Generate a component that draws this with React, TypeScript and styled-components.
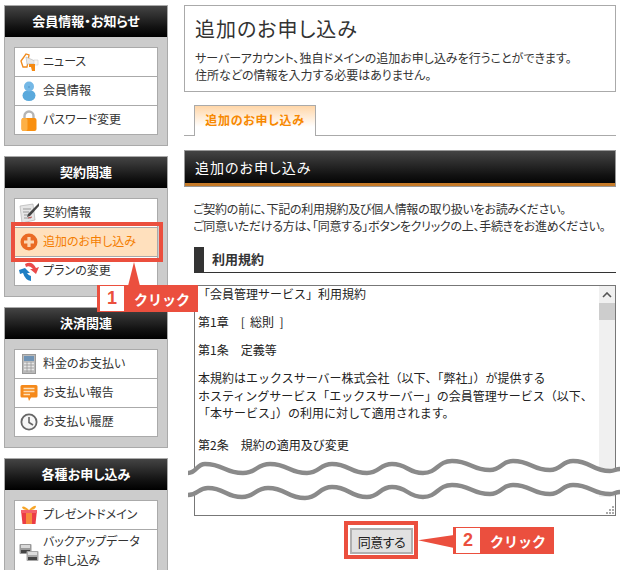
import React from 'react';
import styled, { createGlobalStyle } from 'styled-components';

const GlobalStyle = createGlobalStyle`
  html, body {
    margin: 0;
    padding: 0;
    background: #fff;
  }
  body {
    font-family: "Noto Sans CJK JP", "Liberation Sans", sans-serif;
    font-size: 12px;
    color: #333;
    font-feature-settings: "palt";
  }
`;

const Red = '#eb4f3e';

const IconMegaphone = () => (
  <svg width="20" height="20" viewBox="0 0 20 20">
    <path d="M2 9 L7 2 L10 3 L8 15 L4 15 Z" fill="#fff" stroke="#f08a1c" strokeWidth="1.3" />
    <path d="M7 5 L16 9 L16 12 L8 12 Z" fill="#e8e8e8" stroke="#bbb" strokeWidth="0.7" />
    <path d="M15 8 L19 8 L19 13 L15 13 Z" fill="#f8f8f8" stroke="#ccc" strokeWidth="0.6" />
    <path d="M10 12 L16 12 L16 19 L13 19 L12 15 L10 15 Z" fill="#f58a12" />
  </svg>
);

const IconPerson = () => (
  <svg width="20" height="20" viewBox="0 0 20 20">
    <ellipse cx="10" cy="14.5" rx="6.5" ry="5.5" fill="#5aa9dc" />
    <circle cx="10" cy="5.5" r="5" fill="#74b8e6" />
    <circle cx="10" cy="6" r="0.8" fill="#4a90c4" />
  </svg>
);

const IconLock = () => (
  <svg width="18" height="21" viewBox="0 0 18 21">
    <path d="M4.5 9 V6 a4.5 4.5 0 0 1 9 0 V9" fill="none" stroke="#b5b5b5" strokeWidth="2.4" />
    <rect x="1.5" y="8" width="15" height="13" rx="2" fill="#f98f0e" />
    <rect x="1.5" y="8" width="6" height="13" rx="2" fill="#fdb045" />
  </svg>
);

const IconContract = () => (
  <svg width="22" height="22" viewBox="0 0 22 22">
    <path d="M2 4 L15 2 L17 18 L4 21 Z" fill="#e6e6e6" stroke="#aaa" strokeWidth="0.6" />
    <path d="M5 7 H13 M5 10 H11 M6 13 H10 M6 16 H13" stroke="#999" strokeWidth="1" />
    <path d="M21 1 L10 12 L9 15 L12 14 L21 4 Z" fill="#444" />
    <path d="M10 16 L14 15" stroke="#c0504d" strokeWidth="1" />
  </svg>
);

const IconPlus = () => (
  <svg width="18" height="18" viewBox="0 0 18 18">
    <circle cx="9" cy="9" r="8.5" fill="#ea6a24" />
    <path d="M9 4 V14 M4 9 H14" stroke="#fbd7b4" strokeWidth="3.2" />
  </svg>
);

const IconArrows = () => (
  <svg width="22" height="20" viewBox="0 0 22 20">
    <path d="M7 3 Q14 -1 18 7 L21 6 L18 13 L12 8 L15 8 Q12 4 8 6 Z" fill="#ea4a4a" />
    <path d="M1 9 L7 7 L12 12 L9 12 Q11 15 13 15 L13 20 Q7 19 5 12 L2 13 Z" fill="#1f7fc4" />
  </svg>
);

const IconCalc = () => (
  <svg width="14" height="20" viewBox="0 0 14 20">
    <rect x="0.5" y="0.5" width="13" height="19" fill="#b9b9b9" stroke="#999" />
    <rect x="2" y="2" width="10" height="5" fill="#6f93b5" />
    <path d="M2 9.5 H12 M2 12.5 H12 M2 15.5 H12" stroke="#e6e6e6" strokeWidth="1.6" />
    <path d="M5 8 V18 M9 8 V18" stroke="#999" strokeWidth="0.8" />
  </svg>
);

const IconChat = () => (
  <svg width="18" height="18" viewBox="0 0 18 18">
    <path d="M2 1 H16 Q17.5 1 17.5 2.5 V12 Q17.5 13.5 16 13.5 H11 L9 17 L8 13.5 H2 Q0.5 13.5 0.5 12 V2.5 Q0.5 1 2 1 Z" fill="#f5891a" />
    <path d="M3.5 4.5 H14.5 M3.5 7.5 H14.5 M3.5 10.5 H10" stroke="#fde0b8" strokeWidth="1.4" />
  </svg>
);

const IconClock = () => (
  <svg width="18" height="18" viewBox="0 0 18 18">
    <circle cx="9" cy="9" r="7.6" fill="#f6f6f6" stroke="#666" strokeWidth="1.8" />
    <path d="M9 4 V9.5 L13 12" fill="none" stroke="#666" strokeWidth="1.6" />
  </svg>
);

const IconGift = () => (
  <svg width="18" height="20" viewBox="0 0 18 20">
    <path d="M9 5 Q4 0 2 2 Q2 5 9 5 Q14 0 16 1 Q16 5 9 5" fill="#f7a528" />
    <path d="M1 5 H17 L15.5 19 H2.5 Z" fill="#ec3c45" />
    <path d="M6 5 H12 V19 H6 Z" fill="#f78a3c" />
    <path d="M1 5 H17 V8 H1 Z" fill="#f4606a" />
  </svg>
);

const IconBackup = () => (
  <svg width="20" height="20" viewBox="0 0 20 20">
    <rect x="0.5" y="2" width="12" height="10" rx="1" fill="#9a9a9a" />
    <rect x="2" y="3" width="9" height="3" fill="#d8d8d8" />
    <rect x="2" y="8" width="9" height="3" fill="#444" />
    <rect x="7.5" y="9" width="12" height="10" rx="1" fill="#a8a8a8" />
    <rect x="9" y="10" width="9" height="3" fill="#ddd" />
    <rect x="9" y="15" width="9" height="3" fill="#444" />
  </svg>
);

const Page = styled.div`
  position: relative;
  box-sizing: border-box;
  width: 620px;
  height: 570px;
  overflow: hidden;
  padding: 5px 4px 0;
  display: flex;
  align-items: flex-start;
  gap: 16px;
`;

const Sidebar = styled.nav`
  width: 164px;
  flex: none;
  display: flex;
  flex-direction: column;
  gap: 10px;
`;

const Panel = styled.section`
  box-sizing: border-box;
  width: 100%;
  border: 1px solid #aaa;
  background: #ccc;
`;

const PanelTitle = styled.h3`
  margin: 0;
  height: 31px;
  line-height: 29px;
  text-align: center;
  font-size: 13px;
  font-weight: 700;
  color: #fff;
  background: linear-gradient(#444, #111 70%, #000);
`;

const MenuList = styled.ul`
  list-style: none;
  margin: 10px 9px;
  padding: 0;
  border: 1px solid #aaa;
  background: #fff;
`;

const MenuRow = styled.li<{ $active?: boolean; $tall?: boolean }>`
  display: flex;
  align-items: center;
  min-height: 28px;
  line-height: 18.5px;
  padding: ${(p) => (p.$tall ? '3px 0' : '0')};
  background: ${(p) => (p.$active ? '#ffe0bd' : '#fff')};
  color: ${(p) => (p.$active ? '#f47d00' : '#333')};
  & + & {
    border-top: 1px solid #aaa;
  }
`;

const MenuIcon = styled.span`
  width: 28px;
  flex: none;
  display: flex;
  justify-content: center;
  align-items: center;
`;

const MenuLabel = styled.span`
  position: relative;
  top: -1px;
`;

const Main = styled.main`
  width: 432px;
  flex: none;
`;

const TitleBox = styled.header`
  box-sizing: border-box;
  height: 87px;
  border: 1px solid #aaa;
  padding: 8px 10px 0;
`;

const PageTitle = styled.h1`
  margin: 0 0 5px;
  font-size: 20px;
  line-height: 30px;
  font-weight: 400;
  letter-spacing: 1px;
  color: #333;
`;

const TitleText = styled.p`
  margin: 0;
  line-height: 17px;
`;

const TabBar = styled.div`
  display: flex;
  height: 30px;
  margin-top: 13px;
  padding-left: 10px;
  border-bottom: 1px solid #aaa;
`;

const Tab = styled.div`
  box-sizing: border-box;
  width: 122px;
  height: 31px;
  border: 1px solid #aaa;
  border-bottom: 0;
  background: linear-gradient(#ffd6a8, #fff 70%);
  color: #f78800;
  font-weight: 700;
  letter-spacing: 0.7px;
  text-align: center;
  line-height: 27px;
`;

const SectionBar = styled.div`
  box-sizing: border-box;
  height: 37px;
  margin-top: 14px;
  padding-left: 10px;
  border: 1px solid #999;
  box-shadow: inset 0 -3px 0 #c57a28;
  background: linear-gradient(#444, #111 70%, #000);
  color: #fff;
  font-size: 14px;
  letter-spacing: 1px;
  line-height: 33px;
`;

const Intro = styled.p`
  margin: 13px 0 0 9px;
  line-height: 17px;
  white-space: nowrap;
  letter-spacing: -0.27px;
`;

const SubHeading = styled.h2`
  margin: 13px 0 0 10px;
  height: 25px;
  padding-left: 8px;
  border-left: 10px solid #333;
  border-bottom: 1px solid #333;
  font-size: 13px;
  font-weight: 700;
  line-height: 23px;
  color: #333;
`;

const TermsBox = styled.div`
  box-sizing: border-box;
  display: flex;
  width: 422px;
  height: 231px;
  margin: 12px 0 0 10px;
  border: 1px solid #777;
`;

const TermsText = styled.div`
  flex: 1;
  margin-top: -1px;
  padding: 0 3px;
  color: #222;
  line-height: 17.5px;
  overflow: hidden;
  font-feature-settings: normal;
`;

const TermsPara = styled.p<{ $gap?: number }>`
  margin: 0 0 ${(p) => p.$gap ?? 10.5}px;
`;

const ScrollBar = styled.div`
  position: relative;
  width: 16px;
  height: 211px;
  flex: none;
  background: #f0f0f0;
`;

const ScrollThumb = styled.div`
  height: 17px;
  position: relative;
  top: 17px;
  background: #cdcdcd;
`;

const ScrollArrow = styled.svg<{ $down?: boolean }>`
  position: absolute;
  left: 3px;
  ${(p) => (p.$down ? 'bottom: 5px;' : 'top: 6px;')}
`;

const Grip = styled.svg`
  position: absolute;
  right: 1px;
  bottom: 1px;
`;

const TermsWrap = styled.div`
  position: relative;
`;

const Tear = styled.svg`
  position: absolute;
  left: 4px;
  top: 172px;
`;

const AgreeRow = styled.div`
  margin: 12px 0 0 166px;
`;

const AgreeButton = styled.button`
  display: block;
  box-sizing: border-box;
  width: 63px;
  height: 26px;
  padding: 0;
  border: 2px solid #b0b0b0;
  background: #e1e1e1;
  color: #222;
  font-family: inherit;
  font-feature-settings: inherit;
  font-size: 13px;
  letter-spacing: -0.5px;
`;

const Frame = styled.div<{ $x: number; $y: number; $w: number; $h: number }>`
  position: absolute;
  box-sizing: border-box;
  left: ${(p) => p.$x}px;
  top: ${(p) => p.$y}px;
  width: ${(p) => p.$w}px;
  height: ${(p) => p.$h}px;
  border: 4px solid ${Red};
`;

const Callout = styled.div<{ $x: number; $y: number }>`
  position: absolute;
  box-sizing: border-box;
  left: ${(p) => p.$x}px;
  top: ${(p) => p.$y}px;
  width: 101px;
  height: 27px;
  padding: 1px 3px;
  display: flex;
  align-items: center;
  background: ${Red};
  color: #fff;
  font-size: 14px;
  font-weight: 700;
  font-feature-settings: normal;
`;

const CalloutNumber = styled.span`
  width: 24px;
  height: 25px;
  margin-right: 10px;
  background: #fff;
  color: ${Red};
  font-family: "Liberation Sans", sans-serif;
  font-size: 18px;
  line-height: 25px;
  text-align: center;
`;

const Pointer = styled.div<{ $x: number; $y: number; $w: number; $h: number; $clip: string }>`
  position: absolute;
  left: ${(p) => p.$x}px;
  top: ${(p) => p.$y}px;
  width: ${(p) => p.$w}px;
  height: ${(p) => p.$h}px;
  background: ${Red};
  clip-path: polygon(${(p) => p.$clip});
`;

// extremes of the two torn-paper lines, in the svg's own coordinates (origin at 188,445)
type Pt = [number, number];
const waveTop: Pt[] = [[0, 16], [17, 7], [55, 16], [82, 7], [119, 16], [144, 7], [179, 16], [204, 7], [235, 16], [264, 4], [302, 13], [325, 4], [362, 13], [385, 4], [422, 14], [432, 12]];
const waveBottom: Pt[] = [[0, 38], [20, 31], [54, 40], [80, 31], [117, 41], [144, 30], [179, 40], [204, 30], [235, 40], [264, 28], [302, 37], [325, 28], [362, 37], [385, 28], [422, 37], [432, 35]];

const smooth = (pts: Pt[]) =>
  pts
    .slice(1)
    .map((p, i) => {
      const prev = pts[i];
      const midX = (prev[0] + p[0]) / 2;
      return `C${midX} ${prev[1]} ${midX} ${p[1]} ${p[0]} ${p[1]}`;
    })
    .join(' ');

const start = (pts: Pt[]) => `M${pts[0][0]} ${pts[0][1]}`;
const reversed = [...waveBottom].reverse();
const tearBand = `${start(waveTop)} ${smooth(waveTop)} L${reversed[0][0]} ${reversed[0][1]} ${smooth(reversed)} Z`;

export default function App() {
  return (
    <>
      <GlobalStyle />
      <Page>
        <Sidebar>
          <Panel>
            <PanelTitle>会員情報・お知らせ</PanelTitle>
            <MenuList>
              <MenuRow><MenuIcon><IconMegaphone /></MenuIcon><MenuLabel>ニュース</MenuLabel></MenuRow>
              <MenuRow><MenuIcon><IconPerson /></MenuIcon><MenuLabel>会員情報</MenuLabel></MenuRow>
              <MenuRow><MenuIcon><IconLock /></MenuIcon><MenuLabel>パスワード変更</MenuLabel></MenuRow>
            </MenuList>
          </Panel>
          <Panel>
            <PanelTitle>契約関連</PanelTitle>
            <MenuList>
              <MenuRow><MenuIcon><IconContract /></MenuIcon><MenuLabel>契約情報</MenuLabel></MenuRow>
              <MenuRow $active><MenuIcon><IconPlus /></MenuIcon><MenuLabel>追加のお申し込み</MenuLabel></MenuRow>
              <MenuRow><MenuIcon><IconArrows /></MenuIcon><MenuLabel>プランの変更</MenuLabel></MenuRow>
            </MenuList>
          </Panel>
          <Panel>
            <PanelTitle>決済関連</PanelTitle>
            <MenuList>
              <MenuRow><MenuIcon><IconCalc /></MenuIcon><MenuLabel>料金のお支払い</MenuLabel></MenuRow>
              <MenuRow><MenuIcon><IconChat /></MenuIcon><MenuLabel>お支払い報告</MenuLabel></MenuRow>
              <MenuRow><MenuIcon><IconClock /></MenuIcon><MenuLabel>お支払い履歴</MenuLabel></MenuRow>
            </MenuList>
          </Panel>
          <Panel>
            <PanelTitle>各種お申し込み</PanelTitle>
            <MenuList>
              <MenuRow><MenuIcon><IconGift /></MenuIcon><MenuLabel>プレゼントドメイン</MenuLabel></MenuRow>
              <MenuRow $tall><MenuIcon><IconBackup /></MenuIcon><MenuLabel>バックアップデータ<br />お申し込み</MenuLabel></MenuRow>
            </MenuList>
          </Panel>
        </Sidebar>

        <Main>
          <TitleBox>
            <PageTitle>追加のお申し込み</PageTitle>
            <TitleText>サーバーアカウント、独自ドメインの追加お申し込みを行うことができます。</TitleText>
            <TitleText>住所などの情報を入力する必要はありません。</TitleText>
          </TitleBox>
          <TabBar>
            <Tab>追加のお申し込み</Tab>
          </TabBar>
          <SectionBar>追加のお申し込み</SectionBar>
          <Intro>
            ご契約の前に、下記の利用規約及び個人情報の取り扱いをお読みください。<br />
            ご同意いただける方は、「同意する」ボタンをクリックの上、手続きをお進めください。
          </Intro>
          <SubHeading>利用規約</SubHeading>
          <TermsWrap>
            <TermsBox>
              <TermsText>
                <TermsPara>「会員管理サービス」利用規約</TermsPara>
                <TermsPara>第1章　[&nbsp;&nbsp;総則&nbsp;&nbsp;]</TermsPara>
                <TermsPara>第1条　定義等</TermsPara>
                <TermsPara $gap={14}>
                  本規約はエックスサーバー株式会社（以下、「弊社」）が提供する<br />
                  ホスティングサービス「エックスサーバー」の会員管理サービス（以下、<br />
                  「本サービス」）の利用に対して適用されます。
                </TermsPara>
                <TermsPara>第2条　規約の適用及び変更</TermsPara>
              </TermsText>
              <ScrollBar>
                <ScrollArrow width="10" height="6" viewBox="0 0 10 6">
                  <path d="M1 5 L5 1 L9 5" fill="none" stroke="#555" strokeWidth="1.6" />
                </ScrollArrow>
                <ScrollThumb />
                <ScrollArrow $down width="10" height="6" viewBox="0 0 10 6">
                  <path d="M1 1 L5 5 L9 1" fill="none" stroke="#555" strokeWidth="1.6" />
                </ScrollArrow>
              </ScrollBar>
              <Grip width="10" height="10" viewBox="0 0 10 10">
                <path d="M7 1h2v2H7z M4 4h2v2H4z M7 4h2v2H7z M1 7h2v2H1z M4 7h2v2H4z M7 7h2v2H7z" fill="#aaa" />
              </Grip>
            </TermsBox>
            <Tear width="432" height="45" viewBox="0 0 432 45">
              <path d={tearBand} fill="#fff" />
              <path d={`${start(waveTop)} ${smooth(waveTop)}`} fill="none" stroke="#8a8a8a" strokeWidth="4.4" />
              <path d={`${start(waveBottom)} ${smooth(waveBottom)}`} fill="none" stroke="#8a8a8a" strokeWidth="4.4" />
            </Tear>
          </TermsWrap>
          <AgreeRow>
            <AgreeButton>同意する</AgreeButton>
          </AgreeRow>
        </Main>

        <Frame $x={11} $y={222} $w={152} $h={40} />
        <Pointer $x={128} $y={262} $w={12} $h={24} $clip="50% 0, 100% 100%, 0 100%" />
        <Callout $x={97} $y={285}>
          <CalloutNumber>1</CalloutNumber>クリック
        </Callout>

        <Frame $x={344} $y={521} $w={74} $h={38} />
        <Pointer $x={418} $y={535} $w={36} $h={13} $clip="0 40%, 100% 0, 100% 100%" />
        <Callout $x={453} $y={527}>
          <CalloutNumber>2</CalloutNumber>クリック
        </Callout>
      </Page>
    </>
  );
}
